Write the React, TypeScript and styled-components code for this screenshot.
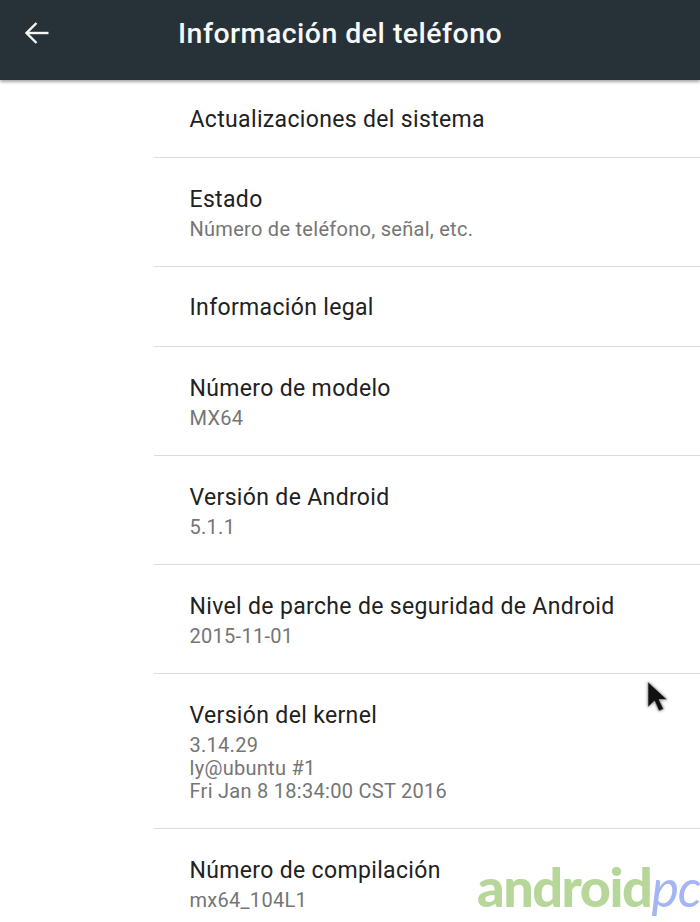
import { createGlobalStyle } from "styled-components";
import styled from "styled-components";

const Global = createGlobalStyle`
  html, body {
    margin: 0;
    padding: 0;
    background: #fff;
  }
  body {
    font-family: Roboto, "Liberation Sans", sans-serif;
  }
`;

const Screen = styled.div`
  position: relative;
  width: 700px;
  height: 922px;
  overflow: hidden;
  background: #fff;
`;

const AppBar = styled.header`
  height: 80px;
  background: #263238;
  display: flex;
  align-items: center;
  padding-bottom: 14px;
  box-sizing: border-box;
  box-shadow: 0 2px 3px rgba(0, 0, 0, 0.35);
`;

const BackButton = styled.div`
  width: 178px;
  padding-left: 24px;
  box-sizing: border-box;
  display: flex;
  align-items: center;
`;

const Title = styled.h1`
  margin: 0;
  font-size: 28.5px;
  font-weight: 500;
  letter-spacing: 0.47px;
  color: #f7f8f8;
`;

const List = styled.ul`
  list-style: none;
  margin: 0;
  padding: 0 0 0 154px;
`;

const Row = styled.li<{ $h: number; $single: boolean }>`
  height: ${(p) => p.$h}px;
  box-sizing: border-box;
  padding-left: 35.5px;
  border-bottom: 1px solid #dcdcdc;
  display: flex;
  flex-direction: column;
  justify-content: ${(p) => (p.$single ? "center" : "flex-start")};
  padding-top: ${(p) => (p.$single ? 1 : 28)}px;
`;

const RowTitle = styled.div`
  font-size: 23px;
  line-height: 27px;
  letter-spacing: 0.34px;
  color: #212121;
`;

const RowSub = styled.div`
  font-size: 20px;
  line-height: 23px;
  letter-spacing: 0.28px;
  color: #757575;
  margin-top: 5px;
  white-space: pre-line;
`;

const Cursor = styled.svg`
  position: absolute;
  left: 646px;
  top: 681px;
  filter: drop-shadow(0 0 1.5px rgba(0, 0, 0, 0.5));
`;

const Watermark = styled.div`
  position: absolute;
  left: 477px;
  top: 856px;
  display: flex;
  align-items: baseline;
  font-family: Lato, sans-serif;
  line-height: 62px;
`;

const MarkGreen = styled.span`
  color: #b7d699;
  font-size: 54px;
  font-weight: 900;
  letter-spacing: -1.5px;
`;

const MarkBlue = styled.span`
  color: #a3b5f2;
  font-size: 52px;
  font-weight: 400;
  font-style: italic;
  letter-spacing: -1px;
`;

const rows = [
  { h: 78, title: "Actualizaciones del sistema" },
  { h: 109, title: "Estado", sub: "Número de teléfono, señal, etc." },
  { h: 80, title: "Información legal" },
  { h: 109, title: "Número de modelo", sub: "MX64" },
  { h: 109, title: "Versión de Android", sub: "5.1.1" },
  { h: 109, title: "Nivel de parche de seguridad de Android", sub: "2015-11-01" },
  { h: 155, title: "Versión del kernel", sub: "3.14.29\nly@ubuntu #1\nFri Jan 8 18:34:00 CST 2016" },
  { h: 109, title: "Número de compilación", sub: "mx64_104L1" },
];

export default function App() {
  return (
    <Screen>
      <Global />
      <AppBar>
        <BackButton>
          <svg width="25" height="24" viewBox="0 0 25 24" fill="none" stroke="#f4f5f5" strokeWidth="2.4">
            <path d="M24.5 12H2.5" />
            <path d="M12.5 2L2.5 12l10 10" />
          </svg>
        </BackButton>
        <Title>Información del teléfono</Title>
      </AppBar>
      <List>
        {rows.map((r) => (
          <Row key={r.title} $h={r.h} $single={!r.sub}>
            <RowTitle>{r.title}</RowTitle>
            {r.sub && <RowSub>{r.sub}</RowSub>}
          </Row>
        ))}
      </List>
      <Cursor width="24" height="32" viewBox="0 0 24 32">
        <path d="M2 1v25l6.5-6 4.5 10 4.5-2-4.5-9.5H21z" fill="#111" stroke="#bbb" strokeWidth="0.6" />
      </Cursor>
      <Watermark>
        <MarkGreen>android</MarkGreen>
        <MarkBlue>pc</MarkBlue>
      </Watermark>
    </Screen>
  );
}
